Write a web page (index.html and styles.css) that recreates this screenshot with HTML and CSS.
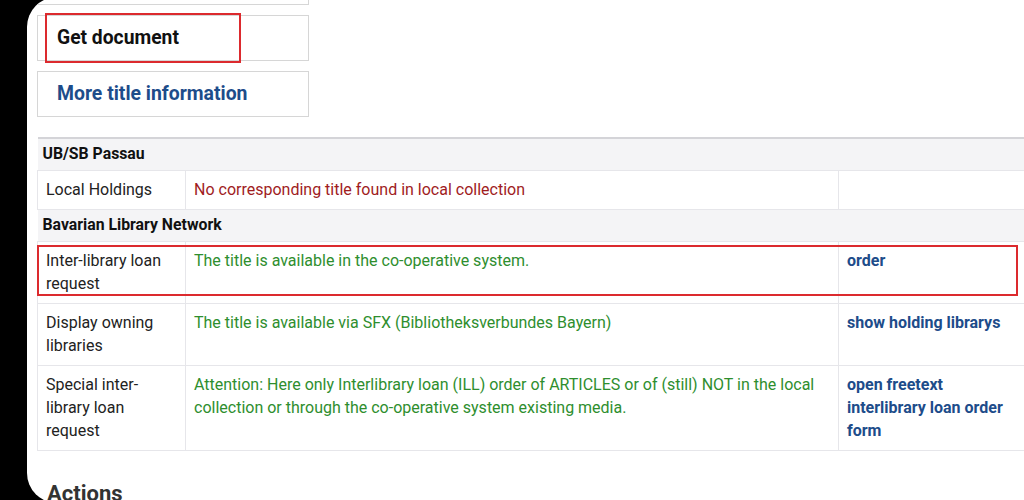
FILE: index.html
```html
<!DOCTYPE html>
<html>
<head>
<meta charset="utf-8">
<link rel="stylesheet" href="styles.css">
</head>
<body>
<div class="card">
  <div class="content">
    <div class="boxes">
      <div class="box"></div>
      <div class="box"><span class="box-title">Get document</span></div>
      <div class="box"><a class="box-link" href="#">More title information</a></div>
    </div>
    <table class="holdings">
      <colgroup>
        <col class="c1">
        <col class="c2">
        <col class="c3">
      </colgroup>
      <tr class="group"><th colspan="3">UB/SB Passau</th></tr>
      <tr>
        <td>Local Holdings</td>
        <td class="red">No corresponding title found in local collection</td>
        <td></td>
      </tr>
      <tr class="group"><th colspan="3">Bavarian Library Network</th></tr>
      <tr>
        <td>Inter-library loan request</td>
        <td class="green">The title is available in the co-operative system.</td>
        <td><a href="#">order</a></td>
      </tr>
      <tr>
        <td>Display owning libraries</td>
        <td class="green">The title is available via SFX (Bibliotheksverbundes Bayern)</td>
        <td><a href="#">show holding librarys</a></td>
      </tr>
      <tr>
        <td>Special inter-library loan request</td>
        <td class="green">Attention: Here only Interlibrary loan (ILL) order of ARTICLES or of (still) NOT in the local collection or through the co-operative system existing media.</td>
        <td><a href="#">open freetext interlibrary loan order form</a></td>
      </tr>
    </table>
    <h2 class="actions">Actions</h2>
  </div>
  <div class="mark mark-doc"></div>
  <div class="mark mark-row"></div>
</div>
</body>
</html>
```

FILE: styles.css
```css
html, body {
  margin: 0;
  padding: 0;
  background: #000;
  height: 500px;
  overflow: hidden;
}
body {
  font-family: Roboto, "Liberation Sans", Arial, sans-serif;
}
.card {
  position: relative;
  margin: -3px 0 0 27px;
  height: 506px;
  background: #fff;
  border-radius: 30px 0 0 30px;
  overflow: hidden;
}
.content {
  padding: 0 0 0 10px;
}
.boxes {
  display: flex;
  flex-direction: column;
  gap: 10px;
  margin-top: -38px;
}
.box {
  box-sizing: border-box;
  width: 272px;
  height: 46px;
  border: 1px solid #d6d6d6;
  display: flex;
  align-items: center;
  padding-left: 19px;
  padding-bottom: 2px;
}
.box-title {
  font-size: 19.3px;
  font-weight: 700;
  color: #111;
}
.box-link {
  font-size: 19.4px;
  font-weight: 700;
  color: #1d4c8a;
  text-decoration: none;
}
.holdings {
  margin-top: 20px;
  width: 988px;
  border-collapse: collapse;
  table-layout: fixed;
  border-top: 2px solid #d4d4d8;
  font-size: 16px;
  line-height: 23px;
  color: #222;
}
.c1 { width: 148px; }
.c2 { width: 653px; }
.holdings th {
  text-align: left;
  font-size: 15.8px;
  font-weight: 700;
  color: #111;
  background: #f4f4f6;
  padding: 4px 5px 5px;
  line-height: 22px;
  border-bottom: 1px solid #e6e6ea;
}
.holdings td {
  vertical-align: top;
  padding: 7px 8px 8px 8px;
  border-bottom: 1px solid #e6e6ea;
  border-left: 1px solid #e6e6ea;
}
.red { color: #a01c1e; }
.green { color: #2e8e2e; }
.holdings a {
  color: #1d4c8a;
  font-weight: 700;
  text-decoration: none;
}
.actions {
  margin: 30px 0 0 10px;
  font-size: 22px;
  font-weight: 700;
  color: #333;
}
.mark {
  position: absolute;
  border: 2px solid #dc2a2e;
  box-sizing: border-box;
}
.mark-doc {
  left: 18px;
  top: 16px;
  width: 196px;
  height: 50px;
}
.mark-row {
  left: 10px;
  top: 248px;
  width: 981px;
  height: 51px;
}
```
